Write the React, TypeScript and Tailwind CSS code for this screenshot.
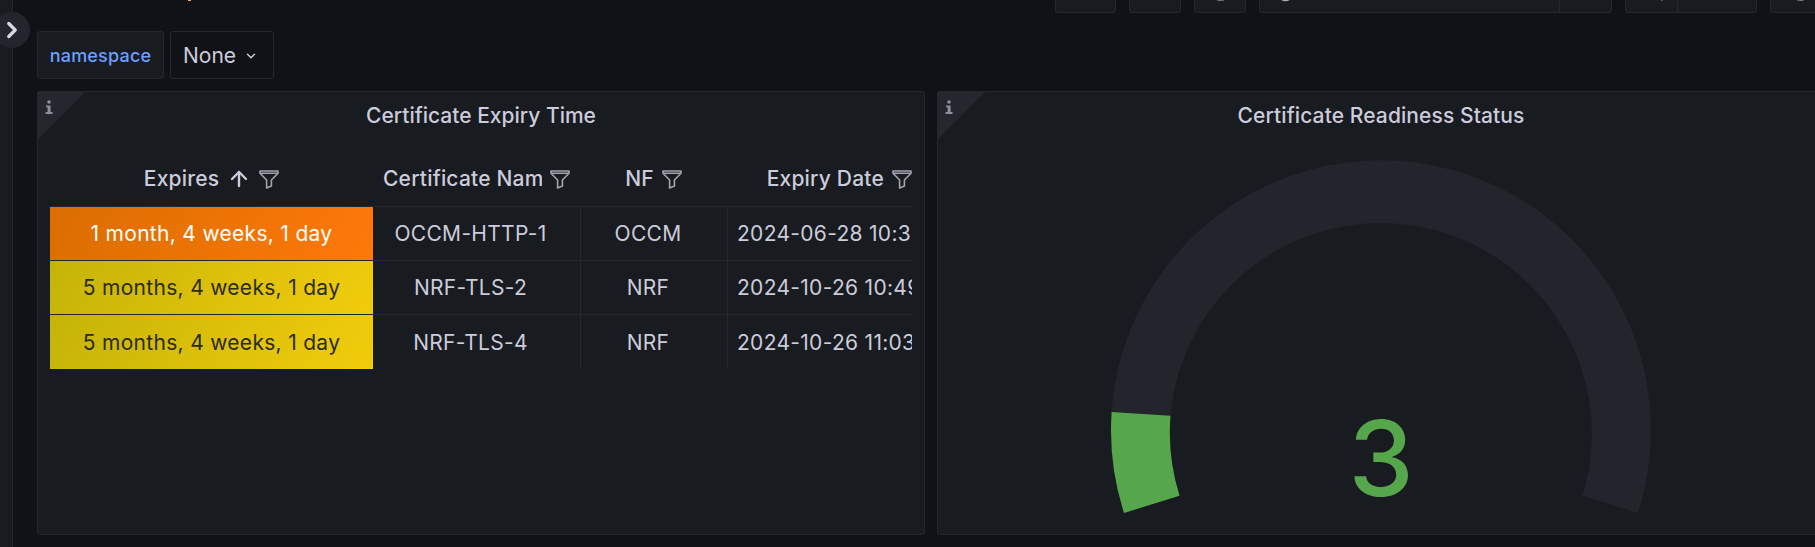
import { ChevronDown, ChevronRight, Clock, Monitor, ZoomOut, ArrowUp } from "lucide-react";

const LINE = "border-[#25272d]";

const ROWS = [
  { expires: "1 month, 4 weeks, 1 day", tone: "from-[#da6e00] to-[#ff780a] text-white", name: "OCCM-HTTP-1", nf: "OCCM", date: "2024-06-28 10:32:14" },
  { expires: "5 months, 4 weeks, 1 day", tone: "from-[#c4b408] to-[#f2cc0c] text-[#2c2b1c]", name: "NRF-TLS-2", nf: "NRF", date: "2024-10-26 10:49:33" },
  { expires: "5 months, 4 weeks, 1 day", tone: "from-[#c4b408] to-[#f2cc0c] text-[#2c2b1c]", name: "NRF-TLS-4", nf: "NRF", date: "2024-10-26 11:03:51" },
];

function Funnel() {
  return (
    <svg viewBox="0 0 20 20" className="w-5 h-5 shrink-0" fill="none" stroke="#a3a4b0" strokeWidth="1.6" strokeLinejoin="round">
      <path d="M1 2h18v2.2l-6.6 6.8v6l-4.8 2v-8L1 4.2zM1 4.2h18" />
    </svg>
  );
}

function InfoCorner() {
  return (
    <div className="absolute -top-px -left-px rounded-tl-[3px] w-0 h-0 border-t-[49px] border-r-[49px] border-t-[#25272e] border-r-transparent">
      <svg viewBox="0 0 8 14" className="absolute -top-[40px] left-[8px] w-[8px] h-[14px]" fill="#8e8f9b">
        <circle cx="4" cy="2" r="1.8" />
        <path d="M1 5.4h4.6v6.6H7.5V14H.6v-2h2V7.3H1z" />
      </svg>
    </div>
  );
}

function TopButton({ className, children }: { className: string; children?: React.ReactNode }) {
  return (
    <div className={`h-[40px] shrink-0 flex items-center bg-[#181b1f] border ${LINE} rounded-[3px] text-[#a9aab6] ${className}`}>
      {children}
    </div>
  );
}

function HeadCell({ label, className, sorted }: { label: string; className: string; sorted?: boolean }) {
  return (
    <div className={`min-w-0 flex items-center gap-[8px] ${className}`}>
      <span className="min-w-0 overflow-hidden whitespace-nowrap">{label}</span>
      {sorted && <ArrowUp size={24} strokeWidth={2.4} className="shrink-0" />}
      <Funnel />
    </div>
  );
}

export default function App() {
  return (
    <div className="relative w-[1815px] h-[547px] overflow-hidden flex bg-[#111217] text-[#ccccdc] font-[Inter,sans-serif]">
      <div className={`w-[13px] shrink-0 bg-[#181b1f] border-r ${LINE}`} />
      <div className="absolute -left-[6px] top-[12px] w-9 h-9 rounded-full bg-[#22252b] flex items-center justify-center text-[#d8d8e2]">
        <ChevronRight size={26} strokeWidth={3} />
      </div>

      <div className="flex-1 min-w-0 pl-[24px] flex flex-col">
        <div className="h-[13px] flex items-end overflow-hidden">
          <span className="mb-[12px] ml-[151px] w-[3px] h-px bg-[#f2a65a]" />
          <div className="ml-auto flex items-end">
            <TopButton className="w-[61px]" />
            <TopButton className="w-[52px] ml-[13px]" />
            <TopButton className="w-[52px] ml-[13px] justify-center"><Monitor size={17} /></TopButton>
            <TopButton className="w-[353px] ml-[13px]">
              <Clock size={17} className="ml-[17px]" />
              <div className={`ml-auto w-[52px] h-full border-l ${LINE} flex items-center justify-center pl-[22px]`}><ChevronDown size={17} /></div>
            </TopButton>
            <TopButton className="w-[132px] ml-[13px]">
              <div className={`w-[52px] h-full border-r ${LINE} flex items-center justify-center pl-[8px]`}><ZoomOut size={17} /></div>
            </TopButton>
            <TopButton className="w-[60px] ml-[13px] -mr-[15px] justify-center"><Monitor size={17} /></TopButton>
          </div>
        </div>

        <div className="mt-[18px] flex gap-[6px] h-[48px]">
          <div className={`w-[127px] flex items-center justify-center bg-[#181b1f] border ${LINE} rounded-[3px] text-[#6e9fff] text-[18px] font-medium tracking-[0.2px]`}>namespace</div>
          <div className={`w-[104px] flex items-center pl-[12px] pt-[2px] bg-[#111217] border ${LINE} rounded-[3px] text-[21px]`}>
            None
            <ChevronDown size={14} strokeWidth={2.4} className="ml-[8px]" />
          </div>
        </div>

        <div className="mt-[12px] h-[444px] flex gap-[12px]">
          <section className={`relative w-[888px] shrink-0 bg-[#181b1f] border ${LINE} rounded-[3px]`}>
            <InfoCorner />
            <h2 className="h-[48px] flex items-center justify-center text-[21px] font-medium">Certificate Expiry Time</h2>
            <div className="mt-[13px] ml-[12px] w-[862px] overflow-hidden text-[21px]">
              <div className={`h-[54px] pb-[2px] grid grid-cols-[323px_207px_147px_185px] items-center font-medium tracking-[0.2px] border-b ${LINE}`}>
                <HeadCell label="Expires" sorted className="justify-center" />
                <HeadCell label="Certificate Name" className="pl-[10px] pr-[10px]" />
                <HeadCell label="NF" className="justify-center" />
                <HeadCell label="Expiry Date" className="justify-end" />
              </div>
              {ROWS.map((row, i) => (
                <div key={row.name} className={`h-[54px] grid grid-cols-[323px_207px_147px_185px] tracking-[0.3px] ${i < 2 ? `border-b ${LINE}` : "h-[53px]"}`}>
                  <div className={`flex items-center justify-center pt-px bg-linear-[120deg] ${row.tone}`}>{row.expires}</div>
                  <div className="flex items-center justify-center pt-px pr-[12px]">{row.name}</div>
                  <div className={`flex items-center justify-center pt-px pr-[12px] border-l ${LINE}`}>{row.nf}</div>
                  <div className={`flex items-center pt-px pl-[9px] border-l ${LINE} overflow-hidden whitespace-nowrap`}>{row.date}</div>
                </div>
              ))}
            </div>
          </section>

          <section className={`relative w-[888px] shrink-0 bg-[#181b1f] border ${LINE} rounded-[3px]`}>
            <InfoCorner />
            <h2 className="h-[46px] pt-[2px] flex items-center justify-center text-[21px] font-medium tracking-[0.1px]">Certificate Readiness Status</h2>
            <svg viewBox="0 0 886 396" className="block w-[886px] h-[396px]">
              <path d="M173.6 274A270 270 0 1 1 700 375L644.5 357.7A211 211 0 1 0 232.5 277.7Z" fill="#22252b" />
              <path d="M186 375A270 270 0 0 1 173.6 274L232.5 277.7A211 211 0 0 0 241.5 357.7Z" fill="#56a64b" />
              <text x="443" y="358" textAnchor="middle" fontSize="104" fontWeight="500" fill="#56a64b" fontFamily="Inter, sans-serif">3</text>
            </svg>
          </section>
        </div>
      </div>
    </div>
  );
}
